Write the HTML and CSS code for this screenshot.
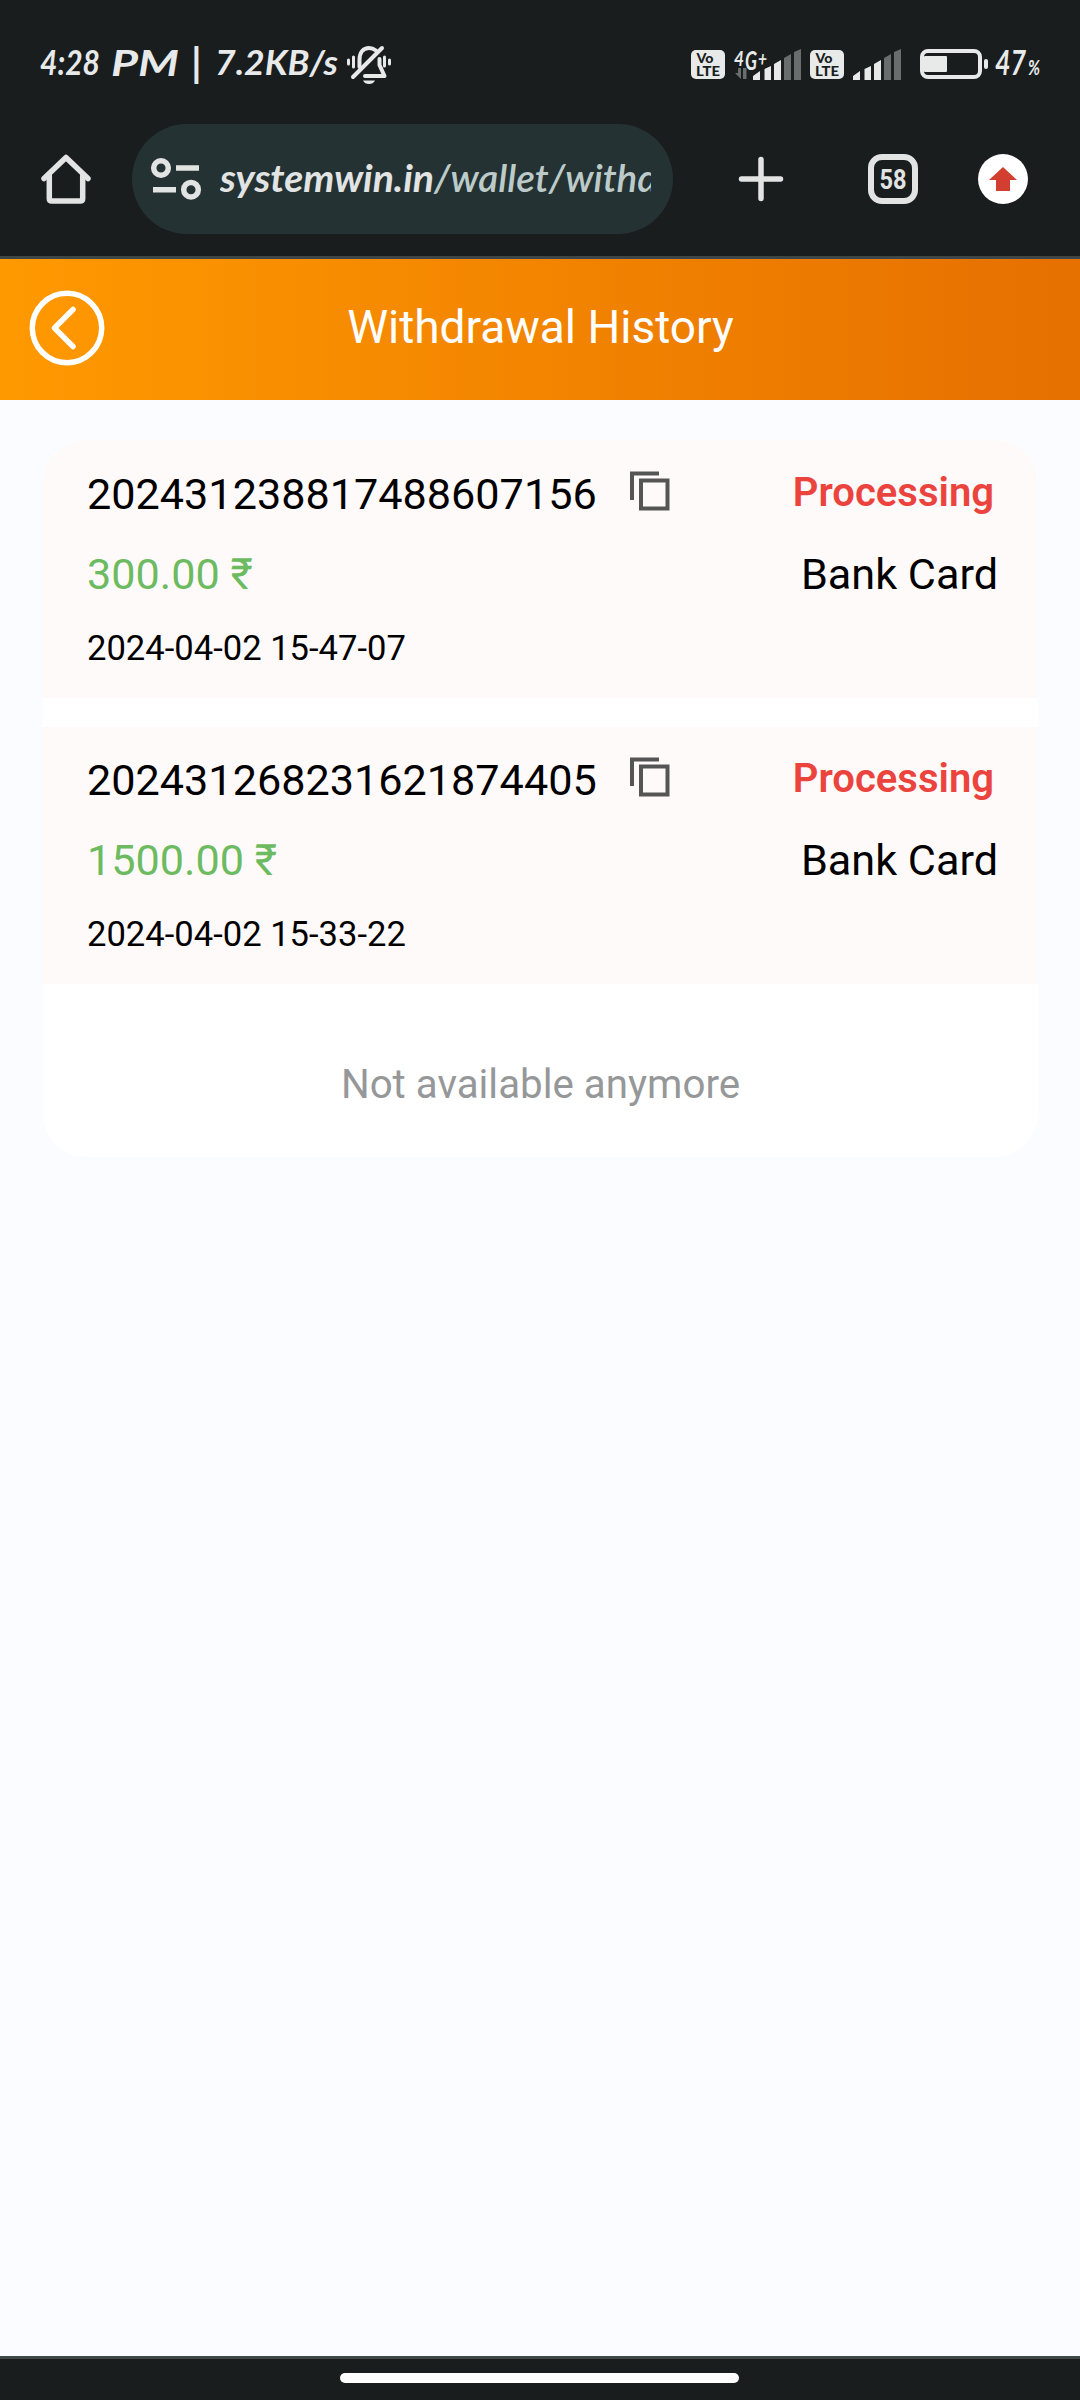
FILE: index.html
```html
<!DOCTYPE html>
<html lang="en">
<head>
    <meta charset="UTF-8">
    <meta name="viewport" content="width=device-width, initial-scale=1.0">
    <title>Withdrawal History</title>
    <link rel="stylesheet" href="styles.css">
</head>
<body>
    <div class="status-bar">
        <svg class="script-text" width="300" height="60" viewBox="40 32 300 60">
            <text x="40" y="75" textLength="60" lengthAdjust="spacingAndGlyphs">4:28</text>
            <text x="111" y="76" font-size="37" textLength="68" lengthAdjust="spacingAndGlyphs">PM</text>
            <text x="191" y="77" font-size="40">|</text>
            <text x="215" y="75" textLength="123" lengthAdjust="spacingAndGlyphs">7.2KB/s</text>
        </svg>
        <svg class="bell" width="46" height="42" viewBox="346 44 46 42" fill="none" stroke="#e8eaea" stroke-width="4" stroke-linecap="round" stroke-linejoin="round">
            <path d="M359.500 67V60c0-8 4-12 9.500-12 3 0 5 1 7 2.500M379.500 59v6l5 11H375"/>
            <path d="M382 48l-29 29"/>
            <path d="M365 76h19"/>
            <path d="M363 80.500h12c-1 2.500-3.500 3.500-6 3.500s-5-1-6-3.500z" fill="#e8eaea" stroke="none"/>
            <path d="M348.500 60v4M353.500 57v10M384.500 57v9M389.500 60v4" stroke-width="3"/>
        </svg>
        <svg class="status-right" width="350" height="60" viewBox="691 32 350 60">
            <g class="volte">
                <rect x="691" y="50" width="34" height="29" rx="5"/>
                <text x="696.500" y="62.500" textLength="17" lengthAdjust="spacingAndGlyphs">Vo</text>
                <text x="696" y="75.500" textLength="24" lengthAdjust="spacingAndGlyphs">LTE</text>
            </g>
            <path class="dim" d="M738 68h3v11l-6-6h3zM743 68h3.500v11H743z"/>
            <path class="lit" d="M753 80v-4l7-5v9zM764.500 80V69l6.500-3v14zM774 80V64l7-4v20z"/>
            <path class="dim" d="M784 80V58l7-4v26zM794 80V52l7-3v31z"/>
            <g class="script-text">
                <text x="734" y="66" font-size="20" textLength="10" lengthAdjust="spacingAndGlyphs">4</text>
                <text x="745" y="70" font-size="27" textLength="12" lengthAdjust="spacingAndGlyphs">G</text>
                <text x="758" y="66" font-size="20" textLength="9" lengthAdjust="spacingAndGlyphs">+</text>
            </g>
            <g class="volte">
                <rect x="810" y="50" width="34" height="29" rx="5"/>
                <text x="815.500" y="62.500" textLength="17" lengthAdjust="spacingAndGlyphs">Vo</text>
                <text x="815" y="75.500" textLength="24" lengthAdjust="spacingAndGlyphs">LTE</text>
            </g>
            <path class="lit" d="M853 80v-4l7-5v9zM864.500 80V69l6.500-3v14zM874 80V64l7-4v20z"/>
            <path class="dim" d="M884 80V58l7-4v26zM894 80V52l7-3v31z"/>
            <rect x="922" y="51" width="58" height="26" rx="6" fill="none" stroke="#e8eaea" stroke-width="4"/>
            <rect class="lit" x="924" y="56" width="23" height="16" rx="1"/>
            <rect class="lit" x="984" y="59" width="4" height="10" rx="2"/>
            <g class="script-text">
                <text x="995" y="75" textLength="31" lengthAdjust="spacingAndGlyphs">47</text>
                <text x="1028" y="75" font-size="20" textLength="12" lengthAdjust="spacingAndGlyphs">%</text>
            </g>
        </svg>
    </div>

    <div class="browser-bar">
        <svg class="home" width="50" height="50" viewBox="0 0 50 50" fill="none" stroke="#e2e4e3" stroke-width="5.500" stroke-linejoin="round" stroke-linecap="round">
            <path d="M3 24.500L25 3.500l22 21"/>
            <path d="M8.300 22v22.500q0 2.500 2.500 2.500h28.400q2.500 0 2.500-2.500V22"/>
        </svg>
        <div class="address">
            <svg class="tune" width="52" height="44" viewBox="150 157 52 44" fill="none" stroke="#e2e4e3" stroke-width="5.500">
                <circle cx="161" cy="168" r="7.300"/>
                <circle cx="191" cy="189.700" r="7.300"/>
                <path d="M176 168h23M153 189.700h23"/>
            </svg>
            <svg class="url" width="431" height="70" viewBox="220 144 431 70">
                <text x="220" y="192" font-weight="700" fill="#e2e4e3" textLength="214" lengthAdjust="spacingAndGlyphs">systemwin.in</text>
                <text x="434" y="192" fill="#bccbc9" textLength="224" lengthAdjust="spacingAndGlyphs">/wallet/withd</text>
            </svg>
        </div>
        <svg class="plus" width="46" height="46" viewBox="0 0 46 46" stroke="#e2e4e3" stroke-width="5.500" stroke-linecap="round">
            <path d="M23 3.500v39M3.500 23h39"/>
        </svg>
        <svg class="tabs" width="50" height="50" viewBox="0 0 50 50">
            <rect x="3" y="3" width="44" height="44" rx="11" fill="none" stroke="#e2e4e3" stroke-width="6"/>
            <text x="11.500" y="34.500" textLength="27" lengthAdjust="spacingAndGlyphs">58</text>
        </svg>
        <svg class="update" width="50" height="50" viewBox="0 0 50 50">
            <circle cx="25" cy="25" r="25" fill="#fff"/>
            <path d="M25 13l14 13h-7v11H18V26h-7z" fill="#d23f31"/>
        </svg>
    </div>

    <header class="page-header">
        <svg class="back" width="76" height="76" viewBox="0 0 76 76" fill="none" stroke="#fff" stroke-linecap="round" stroke-linejoin="round">
            <circle cx="38" cy="38" r="34.700" stroke-width="5.500"/>
            <path d="M44 19.500L25.500 38 44 56.500" stroke-width="5.500"/>
        </svg>
        <h1>Withdrawal History</h1>
    </header>

    <main>
        <div class="history">
            <div class="record">
                <div class="line">
                    <span class="order">202431238817488607156</span>
                    <svg class="copy" width="40" height="40" viewBox="0 0 40 40" fill="none" stroke="#555" stroke-width="4">
                        <path d="M2 29V2.500h27"/>
                        <rect x="11" y="9.500" width="26.500" height="28"/>
                    </svg>
                    <span class="state">Processing</span>
                </div>
                <div class="line second">
                    <span class="amount">300.00 ₹</span>
                    <span class="method">Bank Card</span>
                </div>
                <div class="date">2024-04-02 15-47-07</div>
            </div>
            <div class="record">
                <div class="line">
                    <span class="order">202431268231621874405</span>
                    <svg class="copy" width="40" height="40" viewBox="0 0 40 40" fill="none" stroke="#555" stroke-width="4">
                        <path d="M2 29V2.500h27"/>
                        <rect x="11" y="9.500" width="26.500" height="28"/>
                    </svg>
                    <span class="state">Processing</span>
                </div>
                <div class="line second">
                    <span class="amount">1500.00 ₹</span>
                    <span class="method">Bank Card</span>
                </div>
                <div class="date">2024-04-02 15-33-22</div>
            </div>
            <div class="no-more">Not available anymore</div>
        </div>
    </main>

    <div class="nav-bar">
        <div class="handle"></div>
    </div>
</body>
</html>
```
FILE: styles.css
```css
* {
    box-sizing: border-box;
}
body {
    margin: 0;
    height: 2400px;
    display: flex;
    flex-direction: column;
    font-family: Roboto, "Noto Sans", sans-serif;
    color: #000;
    background-color: #fbfcff;
    overflow: hidden;
}
svg {
    display: block;
    flex-shrink: 0;
}

/* phone status bar */
.status-bar {
    height: 110px;
    padding: 32px 39px 0 40px;
    display: flex;
    background-color: #191d1e;
}
.script-text {
    font-family: Lato, sans-serif;
    font-style: italic;
    font-weight: 700;
    font-size: 34px;
    fill: #e8eaea;
}
.bell {
    margin: 12px 0 0 6px;
}
.status-right {
    margin-left: auto;
}
.lit {
    fill: #e8eaea;
}
.dim {
    fill: #6a6d6d;
}
.volte rect {
    fill: #e8eaea;
}
.volte text {
    fill: #191d1e;
    font-family: Lato, sans-serif;
    font-weight: 900;
    font-size: 14px;
}

/* browser toolbar */
.browser-bar {
    height: 149px;
    padding: 14px 52px 22px 41px;
    display: flex;
    align-items: center;
    background-color: #191d1e;
    border-bottom: 3px solid #3f4746;
}
.address {
    width: 541px;
    height: 110px;
    margin-left: 41px;
    padding-left: 18px;
    display: flex;
    align-items: center;
    border-radius: 55px;
    background-color: #253233;
}
.url {
    margin-left: 18px;
    font-family: Lato, sans-serif;
    font-style: italic;
    font-size: 38px;
    font-weight: 600;
}
.plus {
    margin-left: 65px;
}
.tabs {
    margin-left: 84px;
    font-size: 28px;
    font-weight: 700;
    fill: #e2e4e3;
}
.update {
    margin-left: 60px;
}

/* page title */
.page-header {
    height: 141px;
    padding: 0 28px 0 29px;
    display: grid;
    grid-template-columns: 76px 1fr 76px;
    align-items: center;
    background: linear-gradient(90deg, #ff9900, #e67000);
}
.page-header h1 {
    margin: 0 0 5px;
    text-align: center;
    font-size: 46px;
    font-weight: 400;
    line-height: 54px;
    color: #fff;
}
.back {
    margin-top: -3px;
}

/* withdrawal list */
main {
    flex: 1;
    padding: 40px 42px 0 43px;
}
.history {
    height: 717px;
    border-radius: 43px;
    background-color: #fff;
    overflow: hidden;
}
.record {
    height: 258px;
    margin-bottom: 29px;
    padding: 29px 40px 0 44px;
    background-color: #fffafa;
}
.record + .record {
    height: 257px;
    margin-bottom: 0;
    padding-top: 28px;
}
.line {
    height: 52px;
    display: flex;
    align-items: center;
    font-size: 43.2px;
    line-height: 52px;
}
.second {
    margin-top: 28px;
}
.copy {
    margin: -9px 0 0 33px;
}
.state {
    margin: -4px 4px 0 auto;
    font-size: 40px;
    font-weight: 600;
    color: #eb443e;
}
.amount {
    color: #6dbb60;
}
.method {
    margin-left: auto;
}
.date {
    margin-top: 26px;
    font-size: 34.6px;
    line-height: 42px;
}
.no-more {
    padding-top: 77px;
    text-align: center;
    font-size: 40.3px;
    line-height: 48px;
    color: #969799;
}

/* gesture bar */
.nav-bar {
    height: 44px;
    padding-top: 14px;
    background-color: #191d1e;
    border-top: 3px solid #3f4a48;
}
.handle {
    width: 399px;
    height: 10px;
    margin: 0 auto 0 340px;
    border-radius: 5px;
    background-color: #fff;
}
```
